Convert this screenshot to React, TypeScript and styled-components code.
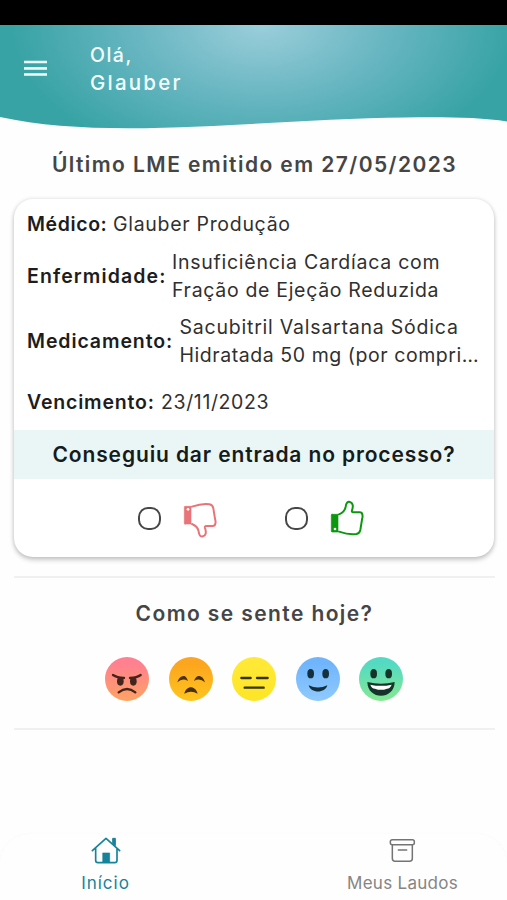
import React from "react";
import styled, { createGlobalStyle } from "styled-components";

const GlobalStyle = createGlobalStyle`
  * { box-sizing: border-box; }
  body { margin: 0; background: #fefefe; font-family: Inter, "Open Sans", sans-serif; }
`;

const Screen = styled.div`
  width: 507px;
  height: 900px;
  display: flex;
  flex-direction: column;
  background: #fefefe;
  overflow: hidden;
`;

const StatusBar = styled.div`
  height: 25px;
  flex: none;
  background: #000;
`;

const Hero = styled.header`
  position: relative;
  height: 105px;
  flex: none;
  display: flex;
  align-items: flex-start;
`;

const Wave = styled.svg`
  position: absolute;
  inset: 0;
`;

const MenuButton = styled.button`
  position: relative;
  display: flex;
  margin: 35px 0 0 24px;
  padding: 0;
  border: 0;
  background: none;
`;

const Greeting = styled.div`
  position: relative;
  display: flex;
  flex-direction: column;
  margin: 17px 0 0 43px;
  color: #f4ffff;
`;

const GreetingLine = styled.span<{ $size: number; $spacing: number }>`
  height: 27px;
  line-height: 27px;
  font-size: ${(p) => p.$size}px;
  font-weight: 500;
  letter-spacing: ${(p) => p.$spacing}px;
`;

const Heading = styled.h2<{ $spacing: number }>`
  margin: 0;
  height: 30px;
  line-height: 30px;
  text-align: center;
  white-space: nowrap;
  font-size: 21px;
  font-weight: 600;
  letter-spacing: ${(p) => p.$spacing}px;
  color: #454545;
`;

const Main = styled.main`
  display: flex;
  flex-direction: column;
  flex: 1;
  padding: 20px 12px 0 14px;
`;

const Card = styled.section`
  display: flex;
  flex-direction: column;
  flex: none;
  width: 480px;
  height: 358px;
  margin: 19px 0 19px;
  border-radius: 19px;
  background: #fff;
  box-shadow: 0 3px 5px rgba(0, 0, 0, 0.2), 0 0 4px rgba(0, 0, 0, 0.12);
  overflow: hidden;
`;

const Row = styled.div<{ $top: number }>`
  display: flex;
  align-items: center;
  margin-top: ${(p) => p.$top}px;
  padding-left: 13px;
  line-height: 28px;
  font-size: 19.5px;
  white-space: nowrap;
`;

const Label = styled.strong<{ $width: number; $spacing: number }>`
  width: ${(p) => p.$width}px;
  flex: none;
  font-weight: 600;
  color: #1d1d1d;
  letter-spacing: ${(p) => p.$spacing}px;
`;

const Value = styled.div`
  display: flex;
  flex-direction: column;
  color: #303030;
`;

const Line = styled.span<{ $spacing: number }>`
  height: 28px;
  letter-spacing: ${(p) => p.$spacing}px;
`;

const Question = styled.div`
  display: flex;
  align-items: center;
  justify-content: center;
  height: 49px;
  margin-top: 14px;
  background: #eaf6f6;
  color: #151c1c;
  font-size: 21px;
  font-weight: 600;
  letter-spacing: 0.87px;
  white-space: nowrap;
`;

const Options = styled.div`
  display: flex;
  flex: 1;
  padding-left: 124px;
  gap: 68px;
`;

const Option = styled.label`
  display: flex;
  align-items: center;
  width: 79px;
  gap: 22px;
`;

const Radio = styled.span`
  width: 23px;
  height: 23px;
  border: 2px solid #474747;
  border-radius: 10px;
`;

const ThumbIcon = styled.svg`
  display: block;
  overflow: visible;
`;

const Divider = styled.hr`
  width: 481px;
  height: 2px;
  flex: none;
  margin: 0;
  border: 0;
  background: #f0f0f0;
`;

const Feeling = styled.section`
  padding-top: 21px;
`;

const Moods = styled.div`
  display: flex;
  justify-content: center;
  gap: 19.5px;
  height: 44px;
  margin: 28px 0 27px;
  padding-right: 1px;
`;

const BottomNav = styled.nav`
  display: flex;
  height: 66px;
  flex: none;
  border-radius: 30px 30px 0 0;
  background: #fefefe;
  box-shadow: 0 0 3px rgba(0, 0, 0, 0.03);
`;

const NavItem = styled.a<{ $active?: boolean; $spacing: number }>`
  display: flex;
  flex: none;
  flex-direction: column;
  align-items: center;
  width: ${(p) => (p.$active ? 211 : 383)}px;
  height: 66px;
  gap: 4px;
  font-size: 17px;
  line-height: 26px;
  letter-spacing: ${(p) => p.$spacing}px;
  color: ${(p) => (p.$active ? "#16839a" : "#858585")};
`;

const Thumb = ({ color, down }: { color: string; down?: boolean }) => (
  <ThumbIcon width="34" height="36" viewBox="0 0 102 108" fill="none">
    <g transform={down ? "translate(0 115) scale(1 -1)" : undefined} stroke={color} strokeWidth="6" strokeLinecap="round" strokeLinejoin="round">
      <path d="M6 43H24V96H6Q4 96 4 93V46Q4 43 6 43Z" fill={color} strokeWidth="2" />
      <path d="M27 43C35 40 45 32 47 20C48 9 53 4 60 6C68 8 71 17 66 31C65 35 66 37 70 37H89Q96 37 97 44C99 50 97 53 96 59L91 90Q89 100 79 102C66 104 45 101 27 95" />
    </g>
    <circle cx="15" cy={down ? 28 : 87} r="4" fill="#fff" />
  </ThumbIcon>
);

const moods = ["angry", "sad", "neutral", "happy", "excited"] as const;
type MoodKind = (typeof moods)[number];
const moodColors: Record<MoodKind, [string, string]> = {
  angry: ["#ff8090", "#ffa363"],
  sad: ["#fca51e", "#ffc51e"],
  neutral: ["#ffe936", "#fde526"],
  happy: ["#70b5fb", "#90caff"],
  excited: ["#54dac3", "#85e891"],
};

const Mood = ({ kind }: { kind: MoodKind }) => (
  <svg width="44" height="44" viewBox="0 0 132 132">
    <defs>
      <linearGradient id={kind} x1="0" y1="0" x2="0" y2="1">
        <stop offset="0.15" stopColor={moodColors[kind][0]} />
        <stop offset="1" stopColor={moodColors[kind][1]} />
      </linearGradient>
    </defs>
    <circle cx="66" cy="66" r="66" fill={`url(#${kind})`} />
    {kind === "angry" && (
      <g fill="#43251d">
        <path d="M24 54Q36 62 57 63M75 63Q96 62 107 54M41 106Q66 86 91 106" fill="none" stroke="#43251d" strokeWidth="7" strokeLinecap="round" />
        <ellipse cx="46" cy="73" rx="10" ry="13" />
        <ellipse cx="85" cy="73" rx="10" ry="13" />
      </g>
    )}
    {kind === "sad" && (
      <g fill="#49300f">
        <path d="M25 76Q32 55 46 57Q52 58 57 72Q40 62 25 76ZM75 72Q80 58 88 57Q101 55 108 76Q92 62 75 72Z" />
        <path d="M46 110C51 84 80 84 86 110Q66 98 46 110Z" />
      </g>
    )}
    {kind === "neutral" && (
      <path d="M28 63H56M75 63H107M38 92H95" fill="none" stroke="#343117" strokeWidth="7" strokeLinecap="round" />
    )}
    {kind === "happy" && (
      <g fill="#14303e">
        <ellipse cx="44" cy="50" rx="10" ry="14" />
        <ellipse cx="89" cy="50" rx="10" ry="14" />
        <path d="M38 85Q66 98 94 85C88 110 44 110 38 85Z" />
      </g>
    )}
    {kind === "excited" && (
      <g fill="#143429">
        <ellipse cx="44" cy="50" rx="10" ry="14" />
        <ellipse cx="89" cy="50" rx="10" ry="14" />
        <path d="M25 75Q66 85 107 75C106 130 26 130 25 75Z" />
        <path d="M34 83Q66 90 98 83Q93 95 84 95Q66 102 48 95Q38 95 34 83Z" fill="#fff" />
      </g>
    )}
  </svg>
);

export default function App() {
  return (
    <Screen>
      <GlobalStyle />
      <StatusBar />
      <Hero>
        <Wave width="507" height="105" viewBox="0 0 507 105">
          <defs>
            <radialGradient id="glow" gradientUnits="userSpaceOnUse" cx="0" cy="0" r="1" gradientTransform="translate(262 0) scale(250 145)">
              <stop offset="0" stopColor="#9bcedb" />
              <stop offset="0.5" stopColor="#68b6c1" />
              <stop offset="1" stopColor="#38a3a5" />
            </radialGradient>
          </defs>
          <path d="M0 0H507V96.500C480 92 440 92 405 92.500C340 93 260 99 200 101.500C120 105 55 104 0 92Z" fill="url(#glow)" />
        </Wave>
        <MenuButton aria-label="Menu">
          <svg width="23" height="17" viewBox="0 0 23 17">
            <path d="M0 2H23M0 8.300H23M0 14.500H23" stroke="#f0ffff" strokeWidth="2.700" />
          </svg>
        </MenuButton>
        <Greeting>
          <GreetingLine $size={19.5} $spacing={1.5}>Olá,</GreetingLine>
          <GreetingLine $size={20.5} $spacing={2.2}>Glauber</GreetingLine>
        </Greeting>
      </Hero>
      <Main>
        <Heading $spacing={1.43}>Último LME emitido em 27/05/2023</Heading>
        <Card>
          <Row $top={11}>
            <Label $width={86} $spacing={0.6}>Médico:</Label>
            <Value><Line $spacing={0.7}>Glauber Produção</Line></Value>
          </Row>
          <Row $top={10}>
            <Label $width={145} $spacing={1.1}>Enfermidade:</Label>
            <Value>
              <Line $spacing={0.74}>Insuficiência Cardíaca com</Line>
              <Line $spacing={0.68}>Fração de Ejeção Reduzida</Line>
            </Value>
          </Row>
          <Row $top={9}>
            <Label $width={152.5} $spacing={0.9}>Medicamento:</Label>
            <Value>
              <Line $spacing={0.78}>Sacubitril Valsartana Sódica</Line>
              <Line $spacing={0.56}>Hidratada 50 mg (por compri…</Line>
            </Value>
          </Row>
          <Row $top={19}>
            <Label $width={134} $spacing={0.82}>Vencimento:</Label>
            <Value><Line $spacing={0.62}>23/11/2023</Line></Value>
          </Row>
          <Question>Conseguiu dar entrada no processo?</Question>
          <Options>
            <Option><Radio /><Thumb color="#e87478" down /></Option>
            <Option><Radio /><Thumb color="#0b980f" /></Option>
          </Options>
        </Card>
        <Divider />
        <Feeling>
          <Heading $spacing={1.4}>Como se sente hoje?</Heading>
          <Moods>
            {moods.map((kind) => <Mood key={kind} kind={kind} />)}
          </Moods>
        </Feeling>
        <Divider />
      </Main>
      <BottomNav>
        <NavItem $active $spacing={1.0}>
          <svg width="30" height="32" viewBox="0 0 90 96" fill="none" stroke="#16839a" strokeWidth="5" strokeLinecap="round" strokeLinejoin="round">
            <path d="M4 50L45 13L86 50M14 43V79Q14 86 21 86H71Q78 86 78 79V43" />
            <path d="M36 57H56V84H36Z" fill="#16839a" strokeWidth="2" />
            <path d="M66 13H73V35L66 29Z" fill="#16839a" strokeWidth="3" />
          </svg>
          Início
        </NavItem>
        <NavItem $spacing={0.28}>
          <svg width="30" height="32" viewBox="0 0 90 96" fill="none" stroke="#747474" strokeWidth="4.500" strokeLinecap="round" strokeLinejoin="round">
            <rect x="7" y="17" width="72" height="15" rx="6" />
            <path d="M13 33V73Q13 82 21 82H65Q73 82 73 73V33M31 48H56" />
          </svg>
          Meus Laudos
        </NavItem>
      </BottomNav>
    </Screen>
  );
}
